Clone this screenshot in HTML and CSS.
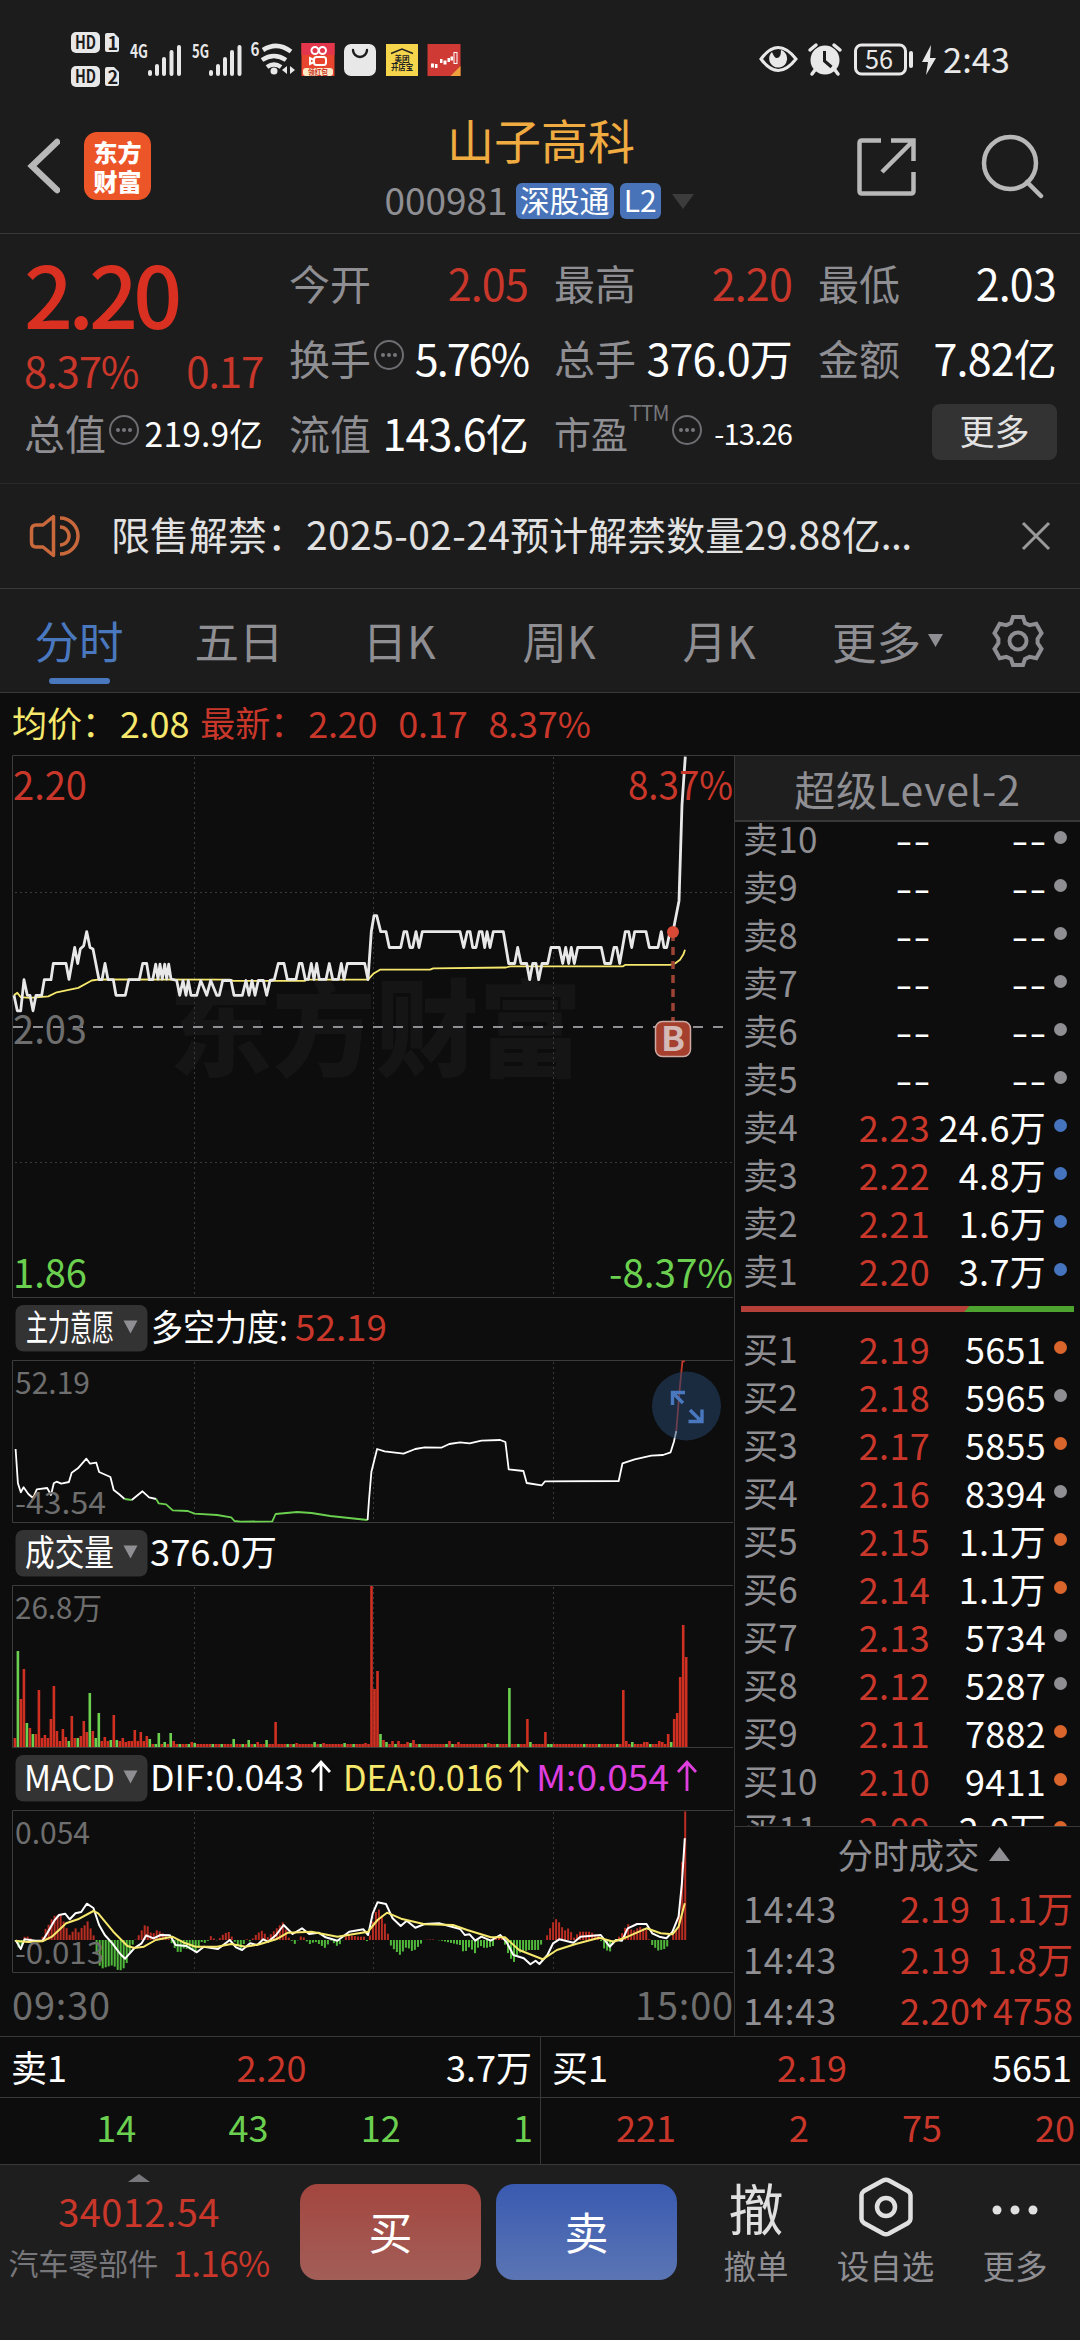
FILE: index.html
```html
<!DOCTYPE html>
<html lang="zh-CN">

<head>
  <meta charset="UTF-8">
  <meta name="viewport" content="width=device-width, initial-scale=1.0">
  <title>山子高科 000981</title>
  <link rel="stylesheet" href="styles.css">
</head>

<body>
  <div class="status">
    <svg class="status-left" width="470" height="116" viewBox="0 0 470 116">
      <g fill="#e8e8e8">
        <rect x="71" y="32" width="29" height="21" rx="5" />
        <rect x="71" y="66" width="29" height="21" rx="5" />
        <path d="M107 33h7l5 5v12a2 2 0 0 1-2 2h-10a2 2 0 0 1-2-2v-15a2 2 0 0 1 2-2z" />
        <path d="M107 67h7l5 5v12a2 2 0 0 1-2 2h-10a2 2 0 0 1-2-2v-15a2 2 0 0 1 2-2z" />
      </g>
      <g class="badge-text">
        <text x="75" y="49" textLength="21" lengthAdjust="spacingAndGlyphs">HD</text>
        <text x="75" y="83" textLength="21" lengthAdjust="spacingAndGlyphs">HD</text>
        <text x="107.500" y="49.500">1</text>
        <text x="107.500" y="83.500">2</text>
      </g>
      <g class="net-text">
        <text x="130" y="57.500" textLength="18" lengthAdjust="spacingAndGlyphs">4G</text>
        <text x="192" y="57.500" textLength="17" lengthAdjust="spacingAndGlyphs">5G</text>
        <text x="250.500" y="56" textLength="9" lengthAdjust="spacingAndGlyphs">6</text>
      </g>
      <g stroke="#e8e8e8" stroke-width="4" stroke-linecap="round">
        <path d="M150 72v2M157 66v8M164 59v15M171.500 52v22M179 47v27" />
        <path d="M211 72v2M218 66v8M225 59v15M232 52v22M239.500 47v27" />
      </g>
      <g fill="none" stroke="#e8e8e8" stroke-width="4.500">
        <path d="M263 50Q277 41 291 51.500M262 60q12-8 24 0M267 67q7-5 14 0" />
      </g>
      <circle cx="274" cy="71" r="3.500" fill="#e8e8e8" />
      <path d="M287 66v8l-5-4zM290 66v8l5-4z" fill="#e8e8e8" />
      <rect x="301.500" y="43" width="33" height="33" fill="#e8452f" />
      <rect x="301.500" y="43" width="33" height="12" fill="#e3364d" />
      <g fill="none" stroke="#fff" stroke-width="2">
        <circle cx="315" cy="50.500" r="3.500" />
        <circle cx="322.500" cy="50.500" r="3.500" />
        <rect x="314" y="57" width="12" height="8" rx="2.500" />
        <path d="M314 60l-4-2v6l4-2" />
      </g>
      <rect x="303" y="68" width="30" height="8" rx="3" fill="#fdebc8" />
      <text class="tiny red" x="308" y="75" textLength="20" lengthAdjust="spacingAndGlyphs">领红包</text>
      <rect x="344" y="44" width="32" height="32" rx="7" fill="#e8e8e8" />
      <path d="M353 50a7 7 0 0 0 14 0" fill="none" stroke="#1c1c1c" stroke-width="2.400" stroke-linecap="round" />
      <rect x="386" y="44" width="32" height="32" fill="#f5d54b" />
      <path d="M391 53.500l11-4.500l11 4.500" fill="none" stroke="#222" stroke-width="1.400" />
      <text class="tiny dark" x="394.500" y="61.500" textLength="15" lengthAdjust="spacingAndGlyphs">美团</text>
      <text class="tiny dark" x="391" y="69.500" textLength="22" lengthAdjust="spacingAndGlyphs">开店宝</text>
      <rect x="427.500" y="44" width="33" height="32" fill="#cf3a34" />
      <path d="M431 65.500h3M435 66h2.500M440 61h2.500M443.500 62.500h3M447.500 60h2.500M450.500 58.500h2.500" stroke="#fff" stroke-width="4" />
      <rect x="454" y="52.500" width="3" height="11" fill="none" stroke="#fff" />
      <path d="M460.500 66v10h-10z" fill="#eda23b" />
    </svg>
    <svg width="324" height="116" viewBox="756 0 324 116">
      <path d="M761 59q17-23 35 0q-18 23-35 0z" fill="none" stroke="#e8e8e8" stroke-width="3" />
      <path d="M772 52a9 9 0 1 0 9-2q0 9-5 8q-2-1-4-6z" fill="#e8e8e8" />
      <circle cx="825" cy="60" r="14.500" fill="#e8e8e8" />
      <path d="M810 50l6-5M840 50l-6-5M815 70l-3 4M835 70l3 4" stroke="#e8e8e8" stroke-width="3.500" stroke-linecap="round" />
      <path d="M824.500 51v10l7 6" fill="none" stroke="#1c1c1c" stroke-width="3" />
      <rect x="855.500" y="45" width="50" height="29" rx="6" fill="none" stroke="#e8e8e8" stroke-width="3" />
      <rect x="909" y="51" width="4" height="17" rx="2" fill="#e8e8e8" />
      <text class="battery" x="865" y="69" textLength="28" lengthAdjust="spacingAndGlyphs">56</text>
      <path d="M931 45l-9 17h6l-2 13l10-17h-6z" fill="#e8e8e8" />
      <text class="clock" x="943" y="73" textLength="67" lengthAdjust="spacingAndGlyphs">2:43</text>
    </svg>
  </div>

  <header class="header">
    <svg class="back" width="34" height="56" viewBox="0 0 34 56">
      <path d="M31 4L6 28L31 52" fill="none" stroke="#b8b8b8" stroke-width="6.500" stroke-linecap="round" />
    </svg>
    <div class="logo"><span>东方</span><span>财富</span></div>
    <div class="title">
      <div class="name">山子高科</div>
      <div class="code">
        <span>000981</span><b class="tag">深股通</b><b class="tag">L2</b>
        <svg width="22" height="15"><path d="M0 0h22l-11 15z" fill="#3c3c3c" /></svg>
      </div>
    </div>
    <svg class="share" width="60" height="60" viewBox="0 0 60 60" fill="none" stroke="#b8b8b8" stroke-width="4.500">
      <path d="M25 3.500H6Q3.500 3.500 3.500 6V54Q3.500 56.500 6 56.500H55Q57.500 56.500 57.500 54V35M35 3.500H57.500V24M57 4L26 35" />
    </svg>
    <svg class="search" width="66" height="66" viewBox="0 0 66 66" fill="none" stroke="#b8b8b8" stroke-width="4.500">
      <circle cx="30" cy="30" r="26" />
      <path d="M47 49L61 63" stroke-linecap="round" />
    </svg>
  </header>

  <section class="quote">
    <div class="quote-main">
      <div class="price">2.20</div>
      <div class="pair red"><span>8.37%</span><span>0.17</span></div>
      <div class="pair third"><label>总值</label><i class="info"></i><span class="small">219.9亿</span></div>
    </div>
    <div class="quote-grid">
      <div class="pair"><label>今开</label><span class="red">2.05</span></div>
      <div class="pair"><label>最高</label><span class="red">2.20</span></div>
      <div class="pair"><label>最低</label><span>2.03</span></div>
      <div class="pair"><label>换手</label><i class="info"></i><span class="tight">5.76%</span></div>
      <div class="pair"><label>总手</label><span>376.0万</span></div>
      <div class="pair"><label>金额</label><span>7.82亿</span></div>
      <div class="pair"><label>流值</label><span>143.6亿</span></div>
      <div class="pair pe"><label>市盈</label><sup>TTM</sup><i class="info"></i><span>-13.26</span></div>
      <div class="pair"><button class="more">更多</button></div>
    </div>
  </section>

  <section class="notice">
    <svg width="54" height="46" viewBox="0 0 54 46" fill="none" stroke="#c9683b" stroke-width="3.500">
      <path d="M24.500 3.500V42.500L14 34H7Q2.500 34 2.500 29V17Q2.500 12 7 12H14z" stroke-linejoin="round" />
      <path d="M31 14a9 9 0 0 1 0 18M31 5a18 18 0 0 1 0 36" />
    </svg>
    <span class="notice-text">限售解禁：<span class="notice-date">2025-02-24</span>预计解禁数量29.88亿<span class="ellipsis">...</span></span>
    <svg class="close" width="30" height="32" viewBox="0 0 30 32"><path d="M2 3L28 29M28 3L2 29" stroke="#9a9a9a" stroke-width="3" /></svg>
  </section>

  <nav class="tabs">
    <a class="tab active">分时</a>
    <a class="tab">五日</a>
    <a class="tab">日K</a>
    <a class="tab">周K</a>
    <a class="tab">月K</a>
    <a class="tab tab-more">更多<svg width="15" height="13"><path d="M0 0h15l-7.500 13z" fill="#8e8e93" /></svg></a>
    <svg class="gear" width="56" height="56" viewBox="-28 -28 56 56" fill="none" stroke="#8e8e93" stroke-width="4">
      <path d="M-5-24H5L7-18L11.600-15.900L18.300-17.300L23.500-7.800L19.600-2.100V2.100L23.500 7.800L18.300 17.300L11.600 15.900L7 18L5 24H-5L-7 18L-11.600 15.900L-18.300 17.300L-23.500 7.800L-19.600 2.100V-2.100L-23.500-7.800L-18.300-17.300L-11.600-15.900L-7-18z" />
      <circle r="8.500" />
    </svg>
  </nav>

  <div class="avg">
    <span class="yellow">均价：</span><span class="yellow num">2.08</span>
    <span class="red">最新：</span><span class="red num">2.20</span><span class="red num">0.17</span><span class="red num">8.37%</span>
  </div>

  <main class="main">
    <div class="charts">
      <svg class="price-chart" width="734" height="543" viewBox="0 0 734 543">
        <text class="watermark" x="169" y="313" textLength="413" lengthAdjust="spacingAndGlyphs">东方财富</text>
        <path class="frame" d="M734 .5H12.500V542.500H733" />
        <path class="dots" d="M194.500 2V541M373.500 2V541M553.500 2V541M15 137.500H733M15 407.500H733" />
        <path d="M13 272H733" stroke="#8e8e93" stroke-width="2" stroke-dasharray="10 10" />
        <g class="axis-text">
          <text class="fill-gray" x="13" y="288.500" textLength="74" lengthAdjust="spacingAndGlyphs">2.03</text>
          <text class="fill-green" x="13" y="532.500" textLength="74" lengthAdjust="spacingAndGlyphs">1.86</text>
          <text class="fill-green" x="609" y="532.500" textLength="124" lengthAdjust="spacingAndGlyphs">-8.37%</text>
        </g>
        <g id="priceLines"></g>
        <g class="axis-text">
          <text class="fill-red" x="13" y="44.500" textLength="74" lengthAdjust="spacingAndGlyphs">2.20</text>
          <text class="fill-red" x="628" y="44.500" textLength="105" lengthAdjust="spacingAndGlyphs">8.37%</text>
        </g>
        <path d="M673 178V266" stroke="#9c4334" stroke-width="3.500" stroke-dasharray="8 6" />
        <circle cx="673" cy="177" r="6" fill="#d94a36" />
        <rect x="655.500" y="266.500" width="35" height="35" rx="7" fill="#a53f2e" stroke="#cfaaa5" stroke-width="1.500" />
        <text class="mark" x="661" y="296" textLength="24" lengthAdjust="spacingAndGlyphs">B</text>
      </svg>

      <div class="pane">
        <svg class="pane-head" width="734" height="62" viewBox="0 0 734 62">
          <rect x="15.500" y="7" width="132" height="46.500" rx="8" fill="#333" />
          <path d="M123.500 22.500h14l-7 13z" fill="#8e8e93" />
          <text x="26" y="42.500" textLength="88" lengthAdjust="spacingAndGlyphs">主力意愿</text>
          <text x="151" y="42.500" textLength="137" lengthAdjust="spacingAndGlyphs">多空力度:</text>
          <text class="fill-red" x="295" y="42.500" textLength="92" lengthAdjust="spacingAndGlyphs">52.19</text>
        </svg>
        <svg class="sub-chart" width="734" height="163" viewBox="0 0 734 163">
          <path class="frame" d="M733 .5H12.500V162.500H733" />
          <path class="dots" d="M194.500 2V161M373.500 2V161M553.500 2V161" />
          <g id="forceLines"></g>
          <g class="sub-text">
            <text x="15" y="33.500" textLength="75" lengthAdjust="spacingAndGlyphs">52.19</text>
            <text x="15" y="154" textLength="91" lengthAdjust="spacingAndGlyphs">-43.54</text>
          </g>
          <circle cx="686.500" cy="46" r="34.500" fill="#26436a" fill-opacity=".55" />
          <path d="M672.500 45V32.500H685M673 33L683 43M702 49.500V61.500H688.500M701 61L690 50" fill="none" stroke="#4a78bf" stroke-width="3.400" />
        </svg>
      </div>

      <div class="pane">
        <svg class="pane-head" width="734" height="62" viewBox="0 0 734 62">
          <rect x="15.500" y="7" width="132" height="46.500" rx="8" fill="#333" />
          <path d="M123.500 22.500h14l-7 13z" fill="#8e8e93" />
          <text x="25" y="42.500" textLength="89" lengthAdjust="spacingAndGlyphs">成交量</text>
          <text x="150" y="42.500" textLength="127" lengthAdjust="spacingAndGlyphs">376.0万</text>
        </svg>
        <svg class="sub-chart" width="734" height="163" viewBox="0 0 734 163">
          <path class="frame" d="M733 .5H12.500V162.500H733" />
          <path class="dots" d="M194.500 2V161M373.500 2V161M553.500 2V161" />
          <g id="volumeBars"></g>
          <text class="sub-text" x="15" y="33.500" textLength="87" lengthAdjust="spacingAndGlyphs">26.8万</text>
        </svg>
      </div>

      <div class="pane">
        <svg class="pane-head" width="734" height="62" viewBox="0 0 734 62">
          <rect x="15.500" y="7" width="132" height="46.500" rx="8" fill="#333" />
          <path d="M123.500 22.500h14l-7 13z" fill="#8e8e93" />
          <text x="24" y="42.500" textLength="91" lengthAdjust="spacingAndGlyphs">MACD</text>
          <text x="150" y="42.500" textLength="154" lengthAdjust="spacingAndGlyphs">DIF:0.043</text>
          <text class="fill-yellow" x="343" y="42.500" textLength="160" lengthAdjust="spacingAndGlyphs">DEA:0.016</text>
          <text class="fill-pink" x="536" y="42.500" textLength="133" lengthAdjust="spacingAndGlyphs">M:0.054</text>
          <g fill="none" stroke-width="2.800">
            <path d="M321 43V15M312 24L321 14L330 24" stroke="#fff" />
            <path d="M519 43V15M510 24L519 14L528 24" stroke="#f6e86c" />
            <path d="M687 43V15M678 24L687 14L696 24" stroke="#e03fe0" />
          </g>
        </svg>
        <svg class="sub-chart" width="734" height="163" viewBox="0 0 734 163">
          <path class="frame" d="M733 .5H12.500V162.500H733" />
          <path class="dots" d="M194.500 2V161M373.500 2V161M553.500 2V161" />
          <g id="macdBars"></g>
          <g id="macdLines"></g>
          <g class="sub-text">
            <text x="15" y="33.500" textLength="75" lengthAdjust="spacingAndGlyphs">0.054</text>
            <text x="15" y="154" textLength="89" lengthAdjust="spacingAndGlyphs">-0.013</text>
          </g>
        </svg>
      </div>
      <div class="times"><span>09:30</span><span>15:00</span></div>
    </div>

    <aside class="book">
      <div class="book-title">超级Level-2</div>
      <div class="book-list">
        <div id="sells"></div>
        <div class="ratio"><i class="ratio-sell"></i><i class="ratio-buy"></i></div>
        <div id="buys"></div>
      </div>
      <div class="deals">
        <div class="deals-title">分时成交<svg width="21" height="14"><path d="M0 14h21L10.500 0z" fill="#8e8e93" /></svg></div>
        <div class="deal"><span>14:43</span><b>2.19</b><em>1.1万</em></div>
        <div class="deal"><span>14:43</span><b>2.19</b><em>1.8万</em></div>
        <div class="deal"><span>14:43</span><b>2.20</b><svg width="18" height="24" viewBox="0 0 18 24"><path d="M9 23V4M2 10L9 3L16 10" fill="none" stroke="#c9372b" stroke-width="3.500" /></svg><em>4758</em></div>
      </div>
    </aside>
  </main>

  <section class="queue">
    <div class="side">
      <div class="best"><span>卖1</span><span class="red">2.20</span><span>3.7万</span></div>
      <div class="orders green"><span>14</span><span>43</span><span>12</span><span>1</span></div>
    </div>
    <div class="side">
      <div class="best"><span>买1</span><span class="red">2.19</span><span>5651</span></div>
      <div class="orders red"><span>221</span><span>2</span><span>75</span><span>20</span></div>
    </div>
  </section>

  <footer class="footer">
    <div class="sector">
      <svg width="22" height="8"><path d="M0 8h22L11 0z" fill="#77777c" /></svg>
      <div class="sector-value red">34012.54</div>
      <div class="sector-name"><span>汽车零部件</span><b class="red">1.16%</b></div>
    </div>
    <button class="trade buy">买</button>
    <button class="trade sell">卖</button>
    <div class="action"><div class="action-icon">撤</div><span>撤单</span></div>
    <div class="action wide">
      <div class="action-icon"><svg width="58" height="60" viewBox="0 0 58 60" fill="none" stroke="#e0e0e0" stroke-width="4.500">
        <path d="M26 3.500Q29 2 32 3.500L51 14Q53.500 16 53.500 18V42Q53.500 44 51 46L32 56.500Q29 58 26 56.500L7 46Q4.500 44 4.500 42V18Q4.500 16 7 14z" />
        <circle cx="29" cy="30" r="9" />
      </svg></div><span>设自选</span>
    </div>
    <div class="action">
      <div class="action-icon"><svg width="50" height="60" viewBox="0 0 50 60" fill="#e0e0e0">
        <circle cx="7" cy="33" r="4.500" /><circle cx="25" cy="33" r="4.500" /><circle cx="43" cy="33" r="4.500" />
      </svg></div><span>更多</span>
    </div>
  </footer>

  <script>
    const red = "#d03022";
    const green = "#6bd04f";

    function line(id, color, width, sx, sy, dy, points) {
      const pts = points.trim().split(/\s+/).map(function(p) {
        const v = p.split(",");
        return (v[0] / sx).toFixed(1) + "," + (v[1] / sy + dy).toFixed(1);
      }).join(" ");
      document.getElementById(id).innerHTML += '<polyline fill="none" stroke-linejoin="round" stroke="' + color + '" stroke-width="' + width + '" points="' + pts + '"/>';
    }

    // price and average price
    line("priceLines", "#f6e86c", 1.8, 3, 2.703, -15, "42,690 52,683 62,695 90,697 145,693 170,682 235,670 275,650 300,647 690,648 700,651 915,651 920,648 1104,648 1120,632 1140,621 1290,621 1300,617 1518,615 1530,612 1868,612 1875,608 2010,608 2025,604 2040,594 2050,580 2055,567");
    line("priceLines", "#e8e8e8", 2.8, 3, 2.703, -15, "42,690 52,732 62,732 72,648 82,690 90,690 99,732 108,690 125,690 133,648 153,648 160,604 198,604 207,647 224,561 233,604 241,565 251,556 260,518 270,561 279,565 297,648 306,648 315,604 324,648 340,648 348,690 376,690 386,648 418,648 428,604 440,604 448,648 458,648 467,606 474,646 480,606 487,646 494,606 500,646 506,606 513,646 530,650 539,690 549,650 558,690 565,650 573,690 590,690 602,650 620,690 632,650 650,690 658,690 668,650 693,650 702,690 727,690 738,650 747,690 756,650 765,690 775,650 790,650 800,690 810,650 823,648 835,604 852,604 862,647 888,647 898,604 906,604 916,647 925,647 934,604 942,647 950,604 958,647 978,647 988,604 998,647 1015,647 1024,604 1032,647 1042,604 1094,604 1104,648 1114,518 1122,475 1130,475 1142,518 1158,518 1168,561 1202,561 1212,518 1220,518 1230,561 1238,561 1248,518 1257,561 1267,518 1380,518 1391,561 1402,518 1410,518 1418,561 1428,561 1438,518 1446,518 1454,561 1461,518 1470,561 1480,518 1510,518 1526,604 1544,604 1553,561 1563,604 1580,604 1589,648 1598,604 1608,604 1616,648 1626,604 1643,604 1653,561 1678,561 1688,604 1697,561 1706,604 1714,561 1723,604 1733,561 1804,561 1814,604 1832,604 1842,561 1850,561 1859,604 1876,518 1886,518 1895,561 1904,518 1938,518 1948,561 1974,561 1984,518 1992,561 2000,561 2010,518 2019,518 2037,435 2046,175 2056,45");

    // long / short force
    const f = [
      ["#fff", "33,447 38,550 44,577 50,562 60,582 70,594 78,568 100,564 108,585 114,550 120,545 130,551 146,546 152,518 165,505 183,476 191,491 204,488 210,516 234,531 241,570 252,582 264,597"],
      [green, "264,597 279,600"],
      ["#fff", "279,600 302,574 316,592 331,597"],
      [green, "331,597 336,610 352,613 366,631 398,633 412,641 460,645 490,652 497,663 510,665 577,664 584,642 630,636 660,639 700,648 779,660"],
      ["#fff", "779,660 782,600 787,515 799,447 815,454 855,461 880,447 900,442 935,443 952,432 975,427 995,430 1020,422 1060,420 1071,426 1078,508 1109,513 1116,549 1148,556 1155,544 1311,543 1319,490 1345,478 1380,467 1405,465 1421,457 1428,425 1433,393"],
      ["#c0392b", "1433,393 1440,270 1446,184 1451,184"]
    ];
    f.forEach(function(s) { line("forceLines", s[0], 1.8, 2.119, 3, -60, s[1]); });

    // volume, height per minute, g marks a falling minute
    const start = "9 96g 48 78 24g 19 13g 13 57 9 12 9 28 61 16 6 18 10 6g 31 9 9g 11 26 15 54g 16 9g 34g 6 10 6 7g 32 7g 6 9 5 6 6 17 6 15 6 11 8g".split(" ");
    const peaks = {48: "14g", 50: "5g", 52: "14g", 53: "6", 55: "3g", 59: "5", 60: "4g", 66: "3g", 73: "8g", 78: "7g", 81: "5", 84: "7g", 87: "25", 94: "4", 100: "5g", 103: "4", 110: "4g", 117: "4", 119: "161", 120: "58", 121: "76", 122: "13g", 123: "7", 124: "5g", 126: "6", 128: "6", 131: "5", 132: "4g", 133: "7", 145: "6", 148: "5", 158: "4", 165: "59g", 171: "28", 172: "5g", 177: "15", 203: "57", 204: "6", 206: "5g", 210: "5", 211: "5", 215: "6", 216: "5", 218: "13", 219: "5g", 220: "28", 221: "34", 222: "70", 223: "122", 224: "90"};
    let bars = "";
    for (let i = 0; i <= 224; i++) {
      let v = start[i] || peaks[i] || (i % 11 == 3 || i % 17 == 8 ? "3g" : "3");
      let h = parseInt(v);
      bars += '<rect x="' + (13.6 + i * 2.997).toFixed(1) + '" y="' + (162 - h) + '" width="2.6" height="' + h + '" fill="' + (v.includes("g") ? green : red) + '"/>';
    }
    document.getElementById("volumeBars").innerHTML = bars;

    // MACD histogram
    const m = "33,575 44,605 48,565 55,557 65,565 70,570 78,573 88,570 95,540 105,520 113,498 128,494 140,530 147,555 152,553 158,528 165,550 172,535 180,525 185,512 192,535 198,552 202,590 208,640 215,656 228,650 240,645 252,664 262,655 270,635 276,600 284,575 292,560 303,535 310,518 316,540 323,555 330,540 340,545 350,555 360,570 368,590 380,612 388,595 410,600 418,610 425,575 437,580 449,553 455,572 462,570 475,550 487,545 494,570 513,600 520,565 530,575 545,550 558,540 565,565 590,530 601,515 610,560 625,582 640,555 655,583 668,575 690,595 700,570 716,590 735,555 760,560 775,560 780,587 787,530 800,470 812,505 820,540 829,590 848,615 862,590 875,605 890,585 897,570 915,568 935,572 975,585 983,610 995,590 1008,612 1015,585 1028,595 1045,588 1052,560 1066,560 1073,600 1088,640 1097,610 1120,600 1140,600 1150,575 1158,560 1170,520 1180,505 1190,530 1200,545 1206,530 1215,565 1228,545 1250,545 1270,560 1280,595 1292,607 1300,580 1318,550 1330,520 1340,545 1355,530 1370,540 1378,580 1395,602 1412,595 1420,570 1433,540 1440,480 1446,325 1452,183".split(" ").map(function(p) { return p.split(",").map(Number); });
    let hist = "";
    for (let i = 0; i <= 223; i++) {
      const X = 33 + i * 6.363;
      let k = 0;
      while (k < m.length - 2 && m[k + 1][0] < X) k++;
      const a = m[k], b = m[k + 1];
      const y = (a[1] + (b[1] - a[1]) * (X - a[0]) / (b[0] - a[0])) / 3 - 60;
      const top = Math.max(1, Math.min(130, y));
      hist += '<rect x="' + (X / 2.119 - 1).toFixed(1) + '" y="' + top.toFixed(1) + '" width="2" height="' + Math.abs(y - 130).toFixed(1) + '" fill="' + (y > 130 ? "#4fb83a" : "#b92d22") + '"/>';
    }
    document.getElementById("macdBars").innerHTML = hist;
    line("macdLines", "#fff", 2, 2.119, 3, -60, "33,570 44,597 52,568 75,572 90,572 100,550 115,512 125,495 138,491 148,508 160,490 172,486 184,461 198,474 210,525 222,555 238,580 255,612 265,626 285,594 300,580 310,556 325,565 340,555 360,556 372,585 395,588 417,607 432,590 462,597 487,570 500,592 513,600 530,580 545,585 558,568 568,575 585,555 601,525 620,552 640,535 655,552 675,548 690,562 715,572 740,545 770,538 780,555 790,490 800,457 818,462 832,505 849,528 862,512 880,533 900,522 930,520 975,537 985,555 995,553 1007,572 1020,560 1040,572 1060,555 1073,575 1088,615 1110,625 1124,643 1135,632 1143,642 1160,615 1172,580 1185,568 1215,578 1230,560 1273,555 1292,590 1305,570 1318,572 1330,535 1350,522 1370,522 1382,550 1397,560 1412,565 1425,545 1438,500 1445,400 1451,265");
    line("macdLines", "#f6e86c", 2, 2.119, 3, -60, "33,573 60,576 90,574 110,560 140,520 165,508 198,483 208,490 240,545 270,588 285,594 305,590 330,570 365,560 390,578 415,590 460,590 490,582 520,590 550,583 585,568 610,548 660,545 715,560 780,545 800,510 820,488 850,506 900,523 960,525 990,540 1040,562 1070,562 1100,600 1150,628 1180,600 1220,582 1270,563 1300,575 1330,560 1370,535 1400,550 1425,553 1438,530 1451,460");

    // order book
    function rows(id, list) {
      document.getElementById(id).innerHTML = list.map(function(r) {
        return '<div class="row"><span>' + r[0] + '</span><b class="' + (r[1] == "--" ? "none" : "red") + '">' + r[1] + '</b><em class="' + (r[2] == "--" ? "none" : "") + '">' + r[2] + '</em><i class="dot ' + r[3] + '"></i></div>';
      }).join("");
    }
    rows("sells", [
      ["卖10", "--", "--", ""], ["卖9", "--", "--", ""], ["卖8", "--", "--", ""],
      ["卖7", "--", "--", ""], ["卖6", "--", "--", ""], ["卖5", "--", "--", ""],
      ["卖4", "2.23", "24.6万", "blue"], ["卖3", "2.22", "4.8万", "blue"],
      ["卖2", "2.21", "1.6万", "blue"], ["卖1", "2.20", "3.7万", "blue"]
    ]);
    rows("buys", [
      ["买1", "2.19", "5651", "orange"], ["买2", "2.18", "5965", ""], ["买3", "2.17", "5855", "orange"],
      ["买4", "2.16", "8394", ""], ["买5", "2.15", "1.1万", "orange"], ["买6", "2.14", "1.1万", "orange"],
      ["买7", "2.13", "5734", ""], ["买8", "2.12", "5287", ""], ["买9", "2.11", "7882", "orange"],
      ["买10", "2.10", "9411", "orange"], ["买11", "2.09", "2.0万", "orange"]
    ]);
  </script>
</body>

</html>
```
FILE: styles.css
```css
* {
  box-sizing: border-box;
}

body {
  margin: 0;
  width: 1080px;
  height: 2340px;
  overflow: hidden;
  background-color: #0d0d0d;
  color: #fff;
  font-family: "Noto Sans CJK SC", "Noto Sans", sans-serif;
  font-size: 36px;
  line-height: 1;
}

b, em, i {
  font-weight: normal;
  font-style: normal;
}

svg {
  display: block;
  flex-shrink: 0;
}

.red { color: #c9372b; }
.green { color: #6bd04f; }
.yellow { color: #f6e86c; }
.fill-red { fill: #c9372b; }
.fill-green { fill: #6bd04f; }
.fill-yellow { fill: #f6e86c; }
.fill-pink { fill: #e03fe0; }
.fill-gray { fill: #6e6e6e; }

/* status bar */
.status {
  display: flex;
  justify-content: space-between;
  height: 116px;
  background-color: #1c1c1c;
}

.badge-text {
  font-size: 18px;
  font-weight: bold;
  fill: #1c1c1c;
}

.net-text {
  font-size: 18px;
  font-weight: bold;
  fill: #e8e8e8;
}

.tiny { font-size: 8px; font-weight: bold; }
.tiny.red { fill: #c9372b; }
.tiny.dark { fill: #222; }
.battery { font-size: 26px; fill: #e8e8e8; }
.clock { font-size: 34px; fill: #e8e8e8; }

/* header */
.header {
  display: flex;
  align-items: flex-start;
  height: 118px;
  padding-left: 26px;
  background-color: #1c1c1c;
  border-bottom: 1px solid #383838;
}

.back {
  margin-top: 22px;
}

.logo {
  display: flex;
  flex-direction: column;
  align-items: center;
  justify-content: center;
  width: 67px;
  height: 68px;
  margin: 16px 0 0 24px;
  border-radius: 13px;
  background-color: #ec5528;
  font-size: 24px;
  font-weight: 900;
  line-height: 29px;
}

.title {
  width: 400px;
  margin-left: 190px;
  text-align: center;
}

.name {
  height: 60px;
  line-height: 46px;
  font-size: 47px;
  color: #f0ab41;
}

.code {
  display: flex;
  align-items: center;
  justify-content: center;
  gap: 6px;
  height: 50px;
  margin-left: -4px;
  color: #8e8e93;
  font-size: 37px;
}

.code span {
  margin-right: 2px;
  padding-bottom: 4px;
}

.tag {
  height: 36px;
  padding: 0 4px;
  border-radius: 6px;
  background-color: #4873b9;
  color: #fff;
  font-size: 30px;
  line-height: 33px;
}

.code svg {
  margin-left: 5px;
}

.share {
  margin: 21px 0 0 115px;
}

.search {
  margin: 17px 0 0 64px;
}

/* quote */
.quote {
  display: flex;
  height: 250px;
  background-color: #1c1c1c;
  border-bottom: 1px solid #292929;
}

.quote-main {
  width: 263px;
  padding: 13px 0 0 24px;
}

.price {
  height: 104px;
  font-size: 86px;
  font-weight: 500;
  line-height: 90px;
  letter-spacing: -4.8px;
  color: #d93022;
}

.quote-main .pair {
  height: 37px;
  font-size: 42px;
}

.quote-main .pair.third {
  height: 89px;
}

.quote-main .red span {
  letter-spacing: -1.2px;
}

.quote-grid {
  display: grid;
  grid-template-columns: 239px 238px 238px;
  grid-template-rows: repeat(3, 75px);
  column-gap: 26px;
  padding: 11px 0 0 26px;
}

.pair {
  display: flex;
  align-items: center;
  font-size: 43px;
  letter-spacing: -0.8px;
  white-space: nowrap;
}

.pair label {
  font-size: 41px;
  color: #8e8e93;
  letter-spacing: 0;
}

.pair span:last-child {
  margin-left: auto;
}

.pair .small {
  font-size: 33.5px;
  letter-spacing: 0.2px;
}

.pair .tight {
  letter-spacing: -2px;
}

.info {
  position: relative;
  width: 30px;
  height: 30px;
  margin: -5px 0 0 3px;
  border: 2px solid #6e6e72;
  border-radius: 50%;
}

.info::after {
  content: "";
  position: absolute;
  left: 5px;
  top: 11px;
  width: 4px;
  height: 4px;
  border-radius: 50%;
  background-color: #77777b;
  box-shadow: 6px 0 #77777b, 12px 0 #77777b;
}

.pe label {
  padding-top: 2px;
  font-size: 37px;
}

.pe sup {
  margin: -40px 0 0 1px;
  font-size: 21px;
  line-height: 21px;
  color: #77777b;
}

.pe span {
  font-size: 29px;
}

.more {
  width: 125px;
  height: 56px;
  margin: -2px -1px 0 auto;
  padding: 0 0 4px;
  border: none;
  border-radius: 8px;
  background-color: #333;
  color: #e2e2e2;
  font: 35px "Noto Sans CJK SC", sans-serif;
  line-height: 50px;
}

/* notice */
.notice {
  display: flex;
  align-items: center;
  height: 105px;
  padding: 0 29px 0 29px;
  background-color: #1c1c1c;
  border-bottom: 1px solid #383838;
}

.notice-text {
  margin-left: 28px;
  padding-bottom: 5px;
  font-size: 39px;
  color: #e2e2e2;
  white-space: nowrap;
}

.notice-date {
  letter-spacing: 0.4px;
}

.ellipsis {
  letter-spacing: -0.5px;
}

.close {
  margin-left: auto;
}

/* tabs */
.tabs {
  display: flex;
  align-items: center;
  height: 104px;
  background-color: #1c1c1c;
  border-bottom: 1px solid #383838;
}

.tab {
  position: relative;
  width: 160px;
  height: 103px;
  padding-right: 2px;
  text-align: center;
  font-size: 44.5px;
  line-height: 101px;
  color: #8e8e93;
}

.tab.active {
  color: #4a78bf;
}

.tab.active::after {
  content: "";
  position: absolute;
  left: 49px;
  bottom: 8px;
  width: 61px;
  height: 6px;
  border-radius: 3px;
  background-color: #4a78bf;
}

.tab-more {
  display: flex;
  align-items: center;
  gap: 7px;
  width: 190px;
  padding-left: 32px;
}

/* average price row */
.avg {
  display: flex;
  align-items: center;
  height: 62px;
  padding-left: 12px;
  padding-bottom: 5px;
  font-size: 35px;
}

.avg .num {
  font-size: 36px;
  letter-spacing: -0.2px;
  margin-right: 21px;
}

.avg .yellow.num {
  margin: 0 11px 0 3px;
}

.avg .red:not(.num) {
  margin-right: 3px;
}

/* charts */
.main {
  display: flex;
  height: 1281px;
}

.charts {
  width: 735px;
  border-right: 1px solid #383838;
}

.frame {
  fill: none;
  stroke: #3c3c3c;
}

.dots {
  fill: none;
  stroke: #3a3a3a;
  stroke-dasharray: 2 3;
}

.watermark {
  font-size: 106px;
  font-weight: 900;
  fill: #151515;
}

.axis-text {
  font-size: 39px;
}

.mark {
  font-size: 33px;
  font-weight: bold;
  fill: #d3bab7;
}

.pane {
  height: 225px;
}

.pane-head {
  font-size: 36px;
  fill: #fff;
}

.sub-text {
  font-size: 30px;
  fill: #6e6e6e;
}

.times {
  display: flex;
  justify-content: space-between;
  padding: 9px 0 0 12px;
  font-size: 38px;
  line-height: 44px;
  letter-spacing: 0.8px;
  color: #6e6e6e;
}

/* order book */
.book {
  display: flex;
  flex-direction: column;
  width: 345px;
}

.book-title {
  height: 67px;
  border-top: 1px solid #383838;
  border-bottom: 2px solid #383838;
  background-color: #1e1e1e;
  text-align: center;
  font-size: 41px;
  line-height: 65px;
  letter-spacing: 0.8px;
  color: #8e8e93;
}

.book-list {
  height: 1004px;
  overflow: hidden;
}

#sells {
  margin-top: -7px;
}

.row {
  display: flex;
  align-items: center;
  height: 48px;
  padding: 0 13px 3px 8px;
  letter-spacing: 0.3px;
}

.row span {
  width: 89px;
  font-size: 35px;
  color: #8e8e93;
}

.row b {
  width: 98px;
  text-align: right;
}

.row em {
  flex: 1;
  margin-right: 8px;
  text-align: right;
}

/* the dashes of an empty level are wider than the font's */
.row .none {
  letter-spacing: 0.8px;
  transform: translateX(1.5px) scaleX(1.35);
  transform-origin: right;
}

.dot {
  width: 13px;
  height: 13px;
  border-radius: 50%;
  background-color: #8e8e93;
}

.dot.blue { background-color: #4573bd; }
.dot.orange { background-color: #d9652c; }

.ratio {
  display: flex;
  height: 6px;
  margin: 11px 6px 13px;
}

.ratio-sell {
  flex: 2.08;
  background-color: #b5403a;
}

.ratio-buy {
  flex: 1;
  margin-left: -5px;
  background-color: #4ea22f;
  clip-path: polygon(5px 0, 100% 0, 100% 100%, 0 100%);
}

.deals {
  height: 210px;
  border-top: 1px solid #383838;
}

.deals-title {
  display: flex;
  align-items: center;
  justify-content: center;
  gap: 9px;
  height: 56px;
  padding: 0 0 2px 32px;
  font-size: 35.5px;
  color: #8e8e93;
}

.deal {
  display: flex;
  align-items: center;
  height: 51px;
  padding: 0 7px 3px 8px;
  color: #c9372b;
}

.deal span {
  width: 157px;
  letter-spacing: 0.8px;
  color: #8e8e93;
}

.deal em {
  margin-left: auto;
}

/* order queue */
.queue {
  display: flex;
  height: 128px;
  border-top: 1px solid #383838;
}

.side {
  width: 540px;
}

.side + .side {
  border-left: 1px solid #383838;
}

.best {
  display: grid;
  grid-template-columns: 1fr 1fr 1fr;
  align-items: center;
  height: 61px;
  padding: 0 8px 2px 11px;
  border-bottom: 1px solid #383838;
  text-align: center;
}

.best span:first-child { text-align: left; }
.best span:last-child { text-align: right; }

.orders {
  display: flex;
  padding: 10px 7px 0 4px;
}

.side + .side .orders {
  padding-left: 2px;
  padding-right: 5px;
}

.orders span {
  flex: 1;
  text-align: right;
}

/* footer */
.footer {
  display: flex;
  height: 176px;
  border-top: 1px solid #383838;
  background-color: #1e1e1e;
}

.sector {
  display: flex;
  flex-direction: column;
  align-items: center;
  width: 278px;
  padding-top: 9px;
}

.sector-value {
  margin-top: 10px;
  font-size: 38px;
  line-height: 38px;
  letter-spacing: 0.4px;
}

.sector-name {
  display: flex;
  align-items: center;
  gap: 14px;
  margin-top: 14px;
  font-size: 30px;
  color: #77777b;
}

.sector-name b {
  font-size: 35px;
  letter-spacing: -0.6px;
}

.trade {
  width: 181px;
  height: 96px;
  margin: 19px 15px 0 0;
  padding: 0 0 2px;
  border: none;
  border-radius: 18px;
  color: #fff;
  font: 44px "Noto Sans CJK SC", sans-serif;
}

.buy {
  margin-left: 22px;
  background: linear-gradient(#a3463f, #a35e58);
}

.sell {
  margin-right: 23px;
  background: linear-gradient(#395ab0, #5b75b4);
}

.action {
  width: 112px;
  text-align: center;
  font-size: 32.5px;
  color: #8e8e93;
}

.action.wide {
  width: 147px;
}

.action-icon {
  display: flex;
  justify-content: center;
  height: 72px;
  margin: 12px 0 0;
  font-size: 55px;
  line-height: 58px;
  color: #e0e0e0;
}
```
